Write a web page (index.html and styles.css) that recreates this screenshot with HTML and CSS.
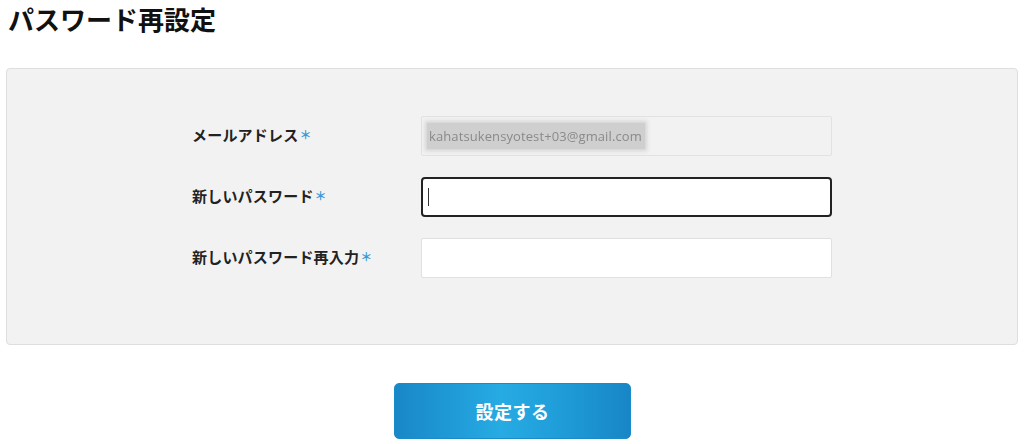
FILE: index.html
```html
<!DOCTYPE html>
<html lang="ja">
<head>
<meta charset="utf-8">
<title>パスワード再設定</title>
<link rel="stylesheet" href="styles.css">
</head>
<body>
<div class="page">
  <h1 class="title">パスワード再設定</h1>
  <div class="panel">
    <div class="form">
      <div class="row">
        <div class="label">メールアドレス<span class="req">＊</span></div>
        <div class="field field-disabled"><span class="email">kahatsukensyotest+03@gmail.com</span></div>
      </div>
      <div class="row">
        <div class="label">新しいパスワード<span class="req">＊</span></div>
        <div class="field field-focus"><span class="caret"></span></div>
      </div>
      <div class="row">
        <div class="label">新しいパスワード再入力<span class="req">＊</span></div>
        <div class="field"></div>
      </div>
    </div>
  </div>
  <div class="actions">
    <button class="submit" type="button">設定する</button>
  </div>
</div>
</body>
</html>
```

FILE: styles.css
```css
html, body {
  margin: 0;
  padding: 0;
  background: #fff;
}
body {
  font-family: "Noto Sans CJK JP", "Noto Sans", sans-serif;
  color: #222;
}
.page {
  padding: 0 6px;
}
.title {
  margin: 0;
  padding: 2px 0 0 2px;
  font-size: 26px;
  line-height: 34px;
  font-weight: 700;
  color: #111;
  height: 68px;
  box-sizing: border-box;
}
.panel {
  background: #f2f2f2;
  border: 1px solid #dedede;
  border-radius: 4px;
  padding: 47px 0 66px;
}
.form {
  width: 640px;
  margin: 0 auto;
  display: flex;
  flex-direction: column;
  gap: 21px;
}
.row {
  display: flex;
  align-items: center;
}
.label {
  width: 229px;
  font-size: 15px;
  font-weight: 700;
  color: #222;
  letter-spacing: 0.2px;
  padding-bottom: 3px;
}
.req {
  color: #3b9ad6;
  font-size: 12px;
  margin-left: 1px;
  vertical-align: 1px;
}
.field {
  width: 411px;
  height: 40px;
  box-sizing: border-box;
  background: #fff;
  border: 1px solid #e0e0e0;
  border-radius: 2px;
  display: flex;
  align-items: center;
  padding-left: 5px;
}
.field-disabled {
  background: #f2f2f2;
  border-color: #e2e2e2;
}
.email {
  font-family: "Open Sans", "Liberation Sans", sans-serif;
  font-size: 13px;
  color: #8a8a8a;
  background: #cfcfcf;
  padding: 4px 3px 4px 2px;
  box-shadow: 0 0 4px 2px #d3d3d3;
  filter: blur(0.5px);
  letter-spacing: 0.1px;
}
.field-focus {
  border: 2px solid #222;
  border-radius: 4px;
  padding-left: 5px;
}
.caret {
  display: block;
  width: 1px;
  height: 18px;
  background: #333;
}
.actions {
  display: flex;
  justify-content: center;
  padding-top: 38px;
}
.submit {
  width: 237px;
  height: 56px;
  border: 1px solid #1b8cca;
  border-radius: 5px;
  background: linear-gradient(to right, #1a87c7 0%, #1f9bd8 25%, #27abe3 45%, #1f9dd9 70%, #1886c6 100%);
  color: #fff;
  font-family: "Noto Sans CJK JP", "Noto Sans", sans-serif;
  font-size: 18px;
  font-weight: 700;
  letter-spacing: 0.5px;
  margin-left: 1px;
  cursor: pointer;
}
```
